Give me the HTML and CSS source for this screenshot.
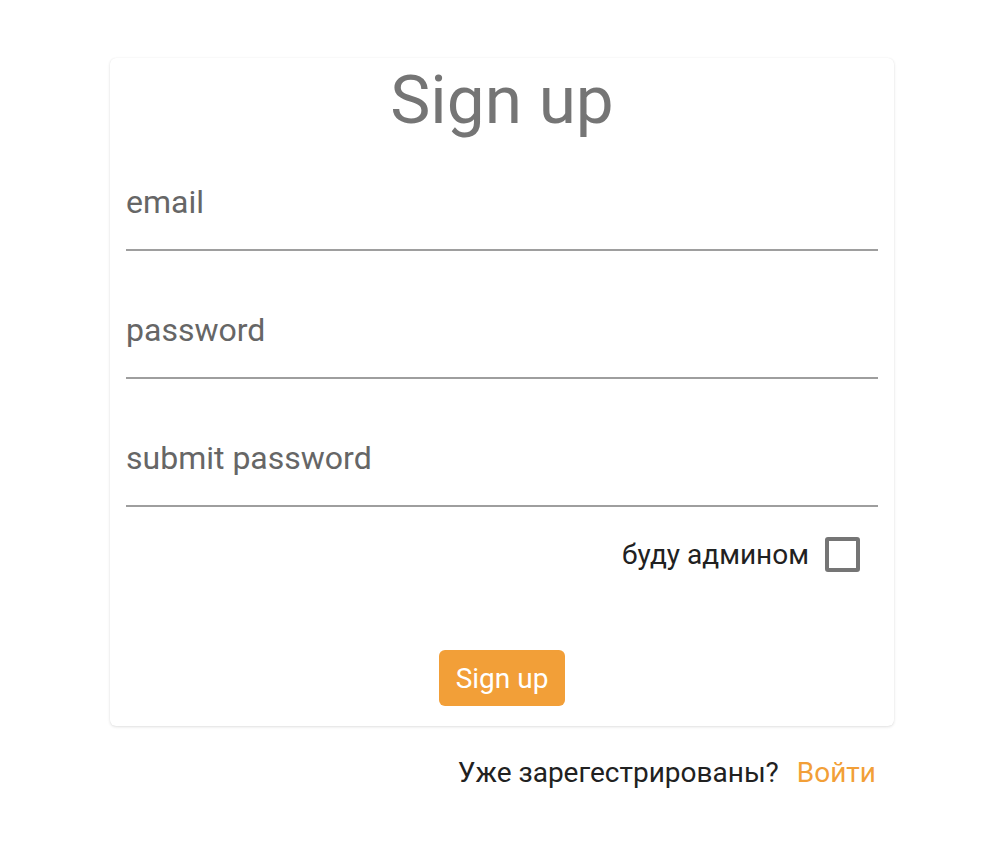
FILE: index.html
```html
<!DOCTYPE html>
<html lang="ru">
<head>
<meta charset="utf-8">
<title>Sign up</title>
<link rel="stylesheet" href="styles.css">
</head>
<body>
<main class="page">
  <form class="card">
    <h1 class="title">Sign up</h1>
    <div class="field field-first"><span class="label">email</span></div>
    <div class="field"><span class="label">password</span></div>
    <div class="field"><span class="label">submit password</span></div>
    <label class="admin">
      <span class="admin-text">буду админом</span>
      <span class="box"></span>
    </label>
    <div class="actions">
      <button type="button" class="btn">Sign up</button>
    </div>
  </form>
  <p class="footer">Уже зарегестрированы? <a class="link" href="#">Войти</a></p>
</main>
</body>
</html>
```
FILE: styles.css
```css
html, body {
  margin: 0;
  padding: 0;
  background: #fff;
  font-family: Roboto, "Noto Sans", sans-serif;
}
.page {
  width: 784px;
  margin: 58px 0 0 110px;
}
.card {
  background: #fff;
  border-radius: 6px;
  box-shadow: 0 1px 3px rgba(0,0,0,0.12), 0 0 1px rgba(0,0,0,0.08);
  padding: 0 16px 20px;
  display: flex;
  flex-direction: column;
}
.title {
  margin: 4px 0 0;
  text-align: center;
  font-weight: 400;
  font-size: 67.5px;
  line-height: 76px;
  color: #757575;
}
.field {
  height: 128px;
  border-bottom: 2px solid #9e9e9e;
  display: flex;
  align-items: flex-end;
  box-sizing: border-box;
}
.field-first {
  height: 113px;
}
.label {
  font-size: 32px;
  line-height: 32px;
  color: #666;
  padding-bottom: 31px;
}
.admin {
  display: flex;
  justify-content: flex-end;
  align-items: center;
  gap: 16px;
  padding: 30px 18px 0 0;
}
.admin-text {
  font-size: 28px;
  color: #212121;
}
.box {
  width: 35px;
  height: 35px;
  box-sizing: border-box;
  border: 4px solid #757575;
  border-radius: 3px;
}
.actions {
  display: flex;
  justify-content: center;
  padding-top: 78px;
}
.btn {
  width: 126px;
  height: 56px;
  border: 0;
  border-radius: 6px;
  background: #f29f38;
  color: #fff;
  font-family: Roboto, sans-serif;
  font-size: 28px;
  padding: 0;
}
.footer {
  margin: 30px 0 0;
  text-align: right;
  padding-right: 18px;
  font-size: 28px;
  color: #212121;
}
.link {
  color: #f29f38;
  text-decoration: none;
  margin-left: 11px;
}
```
